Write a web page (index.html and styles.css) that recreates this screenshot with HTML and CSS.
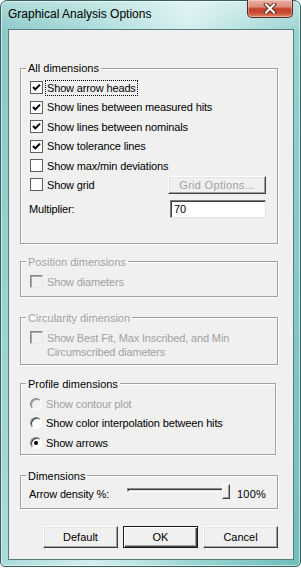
FILE: index.html
```html
<!DOCTYPE html>
<html>
<head>
<meta charset="utf-8">
<link rel="stylesheet" href="styles.css">
</head>
<body>
<div class="window">
  <div class="titlebar">
    <span class="title">Graphical Analysis Options</span>
    <div class="close">
      <svg width="14" height="11" viewBox="0 0 14 11">
        <path d="M3 1.5 L11 9.5 M11 1.5 L3 9.5" stroke="#6a2a22" stroke-width="4" stroke-linecap="square" fill="none"/>
        <path d="M3 1.5 L11 9.5 M11 1.5 L3 9.5" stroke="#ffffff" stroke-width="2" stroke-linecap="square" fill="none"/>
      </svg>
    </div>
  </div>
  <div class="client">
    <fieldset class="group g1">
      <legend>All dimensions</legend>
      <div class="rows">
        <div class="row"><span class="cb"><svg width="11" height="11" viewBox="0 0 11 11"><path d="M2 5 L4.3 7.4 L9 2.6" stroke="#000" stroke-width="2" fill="none"/></svg></span><span class="lbl focus">Show arrow heads</span></div>
        <div class="row"><span class="cb"><svg width="11" height="11" viewBox="0 0 11 11"><path d="M2 5 L4.3 7.4 L9 2.6" stroke="#000" stroke-width="2" fill="none"/></svg></span><span class="lbl">Show lines between measured hits</span></div>
        <div class="row"><span class="cb"><svg width="11" height="11" viewBox="0 0 11 11"><path d="M2 5 L4.3 7.4 L9 2.6" stroke="#000" stroke-width="2" fill="none"/></svg></span><span class="lbl">Show lines between nominals</span></div>
        <div class="row"><span class="cb"><svg width="11" height="11" viewBox="0 0 11 11"><path d="M2 5 L4.3 7.4 L9 2.6" stroke="#000" stroke-width="2" fill="none"/></svg></span><span class="lbl">Show tolerance lines</span></div>
        <div class="row"><span class="cb"></span><span class="lbl">Show max/min deviations</span></div>
        <div class="row"><span class="cb"></span><span class="lbl">Show grid</span><span class="btn grid-btn">Grid Options...</span></div>
      </div>
      <div class="mult-row"><span class="mult-lbl">Multiplier:</span><span class="input">70</span></div>
    </fieldset>

    <fieldset class="group g2 disabled">
      <legend>Position dimensions</legend>
      <div class="rows">
        <div class="row"><span class="cb dis"></span><span class="lbl">Show diameters</span></div>
      </div>
    </fieldset>

    <fieldset class="group g3 disabled">
      <legend>Circularity dimension</legend>
      <div class="rows">
        <div class="row multi"><span class="cb dis"></span><span class="lbl">Show Best Fit, Max Inscribed, and Min<br>Circumscribed diameters</span></div>
      </div>
    </fieldset>

    <fieldset class="group g4">
      <legend>Profile dimensions</legend>
      <div class="rows">
        <div class="row"><span class="rb dis"></span><span class="lbl gray">Show contour plot</span></div>
        <div class="row"><span class="rb"></span><span class="lbl">Show color interpolation between hits</span></div>
        <div class="row"><span class="rb on"></span><span class="lbl">Show arrows</span></div>
      </div>
    </fieldset>

    <fieldset class="group g5">
      <legend>Dimensions</legend>
      <div class="rows">
        <div class="row slider-row">
          <span class="slider-lbl">Arrow density %:</span>
          <span class="slider"><span class="channel"></span><span class="thumb"></span></span>
          <span class="pct">100%</span>
        </div>
      </div>
    </fieldset>

    <div class="buttons">
      <span class="btn dlg">Default</span>
      <span class="btn dlg def">OK</span>
      <span class="btn dlg">Cancel</span>
    </div>
  </div>
</div>
</body>
</html>
```

FILE: styles.css
```css
* { box-sizing: border-box; }
html, body { margin: 0; padding: 0; background: #ffffff; }
body {
  width: 301px;
  height: 569px;
  overflow: hidden;
  font-family: "Liberation Sans", Arial, sans-serif;
  font-size: 11px;
  color: #000;
}
.window {
  width: 301px;
  height: 567px;
  border: 1px solid #35605f;
  border-radius: 7px 7px 5px 5px;
  padding: 0 6px 6px 7px;
  display: flex;
  flex-direction: column;
  background:
    linear-gradient(180deg, rgba(255,255,255,0.35) 0, rgba(255,255,255,0.05) 28px, rgba(255,255,255,0) 29px),
    linear-gradient(100deg, #86c8c6 0%, #a4d8d7 22%, #d3eeee 48%, #b5e0df 62%, #8fcecc 80%, #70bdba 100%);
  box-shadow: inset 0 0 0 1px rgba(255,255,255,0.55);
}
.titlebar {
  height: 28px;
  display: flex;
  justify-content: space-between;
  align-items: flex-start;
}
.title {
  padding-top: 6px;
  font-size: 12px;
  line-height: 14px;
  color: #000;
}
.close {
  width: 46px;
  height: 18px;
  margin-top: -1px;
  margin-right: 1px;
  border: 1px solid #5a2a24;
  border-top: none;
  border-radius: 0 0 5px 5px;
  background: linear-gradient(180deg, #eab0a3 0%, #dc8c7a 40%, #c4402c 52%, #c94a33 75%, #e08a6a 100%);
  box-shadow: inset 0 0 0 1px rgba(255,255,255,0.35);
  display: flex;
  align-items: center;
  justify-content: center;
}
.client {
  flex: 1;
  background: #f0f0f0;
  border: 1px solid #557d7e;
  padding: 31px 15px 0 11px;
  display: flex;
  flex-direction: column;
}
.group {
  margin: 0;
  padding: 0;
  min-width: 0;
  border: 1px solid #a0a0a0;
  box-shadow: 1px 1px 0 #ffffff, inset 1px 1px 0 #ffffff;
}
.group legend {
  margin-left: 5px;
  padding: 0 2px;
  font-size: 11px;
  line-height: 14px;
}
.disabled legend, .disabled .lbl, .gray { color: #a0a0a0; }
.rows { padding: 3.3px 0 0 9px; }
.row {
  height: 19.4px;
  display: flex;
  align-items: center;
}
.lbl {
  margin-left: 3px;
  padding: 0 1px;
  line-height: 14px;
  white-space: nowrap;
  letter-spacing: -0.15px;
}
.focus { outline: 1px dotted #000; }
.cb {
  width: 13px;
  height: 13px;
  flex: none;
  background: #fff;
  border: 1px solid #5f5f5f;
  display: flex;
  align-items: center;
  justify-content: center;
}
.cb.dis {
  background: #f0f0f0;
  border-color: #8a8a8a #e6e6e6 #e6e6e6 #8a8a8a;
  box-shadow: inset 1px 1px 0 #a8a8a8;
}
.rb {
  width: 12px;
  height: 12px;
  flex: none;
  border-radius: 50%;
  background: #fff;
  border: 1px solid;
  border-color: #808080 #ffffff #ffffff #808080;
  box-shadow: inset 1px 1px 0 #404040;
  display: flex;
  align-items: center;
  justify-content: center;
}
.rb.dis { background: #f0f0f0; box-shadow: inset 1px 1px 0 #a0a0a0; }
.rb.on::after {
  content: "";
  width: 4px;
  height: 4px;
  border-radius: 50%;
  background: #000;
}
.btn {
  display: flex;
  align-items: center;
  justify-content: center;
  background: #f0f0f0;
  border: 1px solid;
  border-color: #ffffff #404040 #404040 #ffffff;
  box-shadow: inset -1px -1px 0 #a0a0a0, inset 1px 1px 0 #e3e3e3;
  font-size: 11px;
  white-space: nowrap;
}
.grid-btn {
  margin-left: auto;
  margin-right: 11px;
  width: 98px;
  height: 18px;
  color: #a0a0a0;
  letter-spacing: 0.3px;
}
.g1 .rows { padding-top: 3.3px; }
.mult-row {
  margin-top: 5.3px;
  padding: 0 11px 25px 8px;
  display: flex;
  align-items: center;
  justify-content: space-between;
  height: 43px;
  align-items: flex-start;
}
.mult-lbl { line-height: 18px; letter-spacing: -0.15px; }
.input {
  width: 96px;
  height: 18px;
  background: #fff;
  border: 1px solid;
  border-color: #7a7a7a #e4e4e4 #e4e4e4 #7a7a7a;
  box-shadow: inset 1px 1px 0 #404040;
  padding-left: 3px;
  line-height: 16px;
}
.g2 { margin-top: 11px; }
.g2 .rows { padding-bottom: 4.3px; }
.g3 { margin-top: 14px; }
.g3 .rows { padding-top: 6px; padding-bottom: 5px; }
.row.multi { height: auto; align-items: flex-start; }
.row.multi .cb { margin-top: 0.5px; }
.g4 { margin-top: 12px; margin-right: 2px; }
.g4 .rows { padding-bottom: 1.5px; }
.g5 { margin-top: 14px; }
.g5 .rows { padding: 1.3px 0 4.3px 8px; }
.slider-lbl { width: 98px; flex: none; letter-spacing: -0.15px; }
.slider {
  position: relative;
  width: 103px;
  height: 19.4px;
  flex: none;
}
.channel {
  display: block;
  margin-top: 4px;
  height: 4px;
  border: 1px solid;
  border-color: #8a8a8a #ffffff #ffffff #8a8a8a;
  background: #e0e0e0;
  box-shadow: inset 1px 1px 0 #404040;
}
.thumb {
  position: absolute;
  right: 0;
  top: 0;
  width: 8px;
  height: 15px;
  background: #f0f0f0;
  border: 1px solid;
  border-color: #ffffff #404040 #404040 #ffffff;
  box-shadow: inset -1px -1px 0 #a0a0a0;
}
.pct { margin-left: 7px; letter-spacing: 0.2px; }
.buttons {
  margin-top: 17px;
  display: flex;
  justify-content: flex-end;
  gap: 5px;
}
.dlg { width: 75px; height: 22px; }
.dlg.def {
  border: 1px solid #1a1a1a;
  box-shadow: inset 1px 1px 0 #ffffff, inset -1px -1px 0 #404040, inset -2px -2px 0 #a0a0a0;
}
```
